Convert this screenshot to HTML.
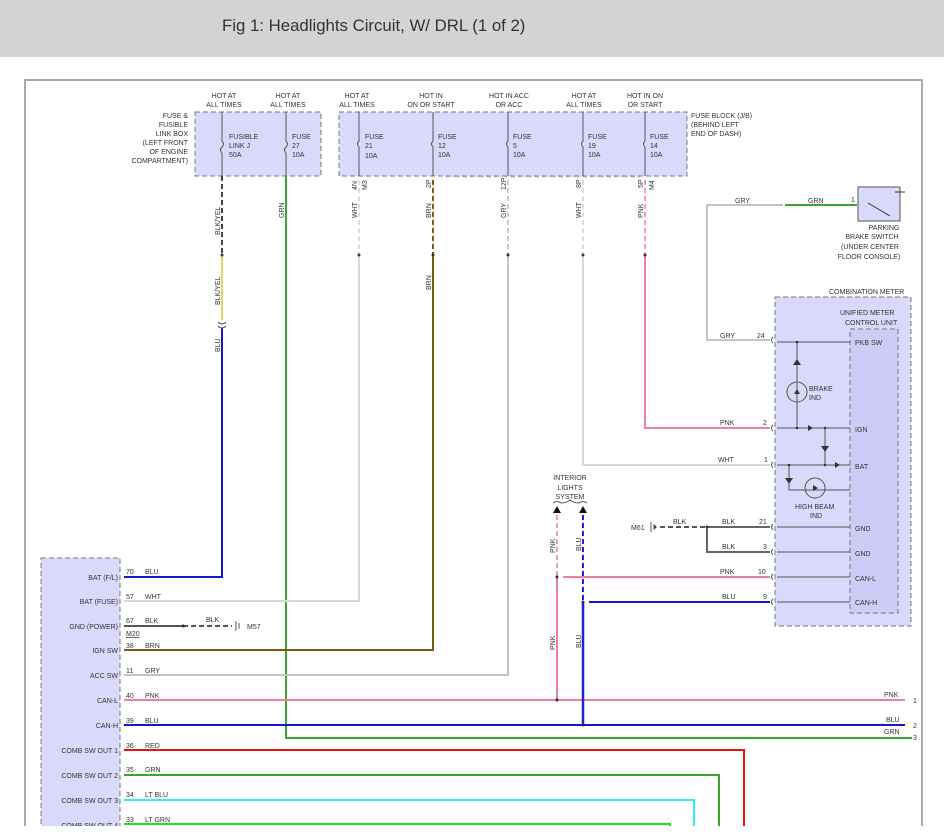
<!DOCTYPE html>
<html><head><meta charset="utf-8"><style>
body{margin:0;width:944px;height:839px;overflow:hidden;background:#fff;font-family:"Liberation Sans",sans-serif}
.hdr{position:absolute;left:0;top:0;width:944px;height:57px;background:#d3d3d3}
.hdr span{position:absolute;left:222px;top:16px;font-size:16.8px;color:#333}
svg{position:absolute;left:0;top:0}
text{font-family:"Liberation Sans",sans-serif;font-size:7px;fill:#333}
.cut{position:absolute;left:0;top:826px;width:944px;height:13px;background:#fff}
</style></head><body>
<div class="hdr"><span>Fig 1: Headlights Circuit, W/ DRL (1 of 2)</span></div>
<svg width="944" height="839" viewBox="0 0 944 839">
<path d="M25 839V80H922V839" fill="none" stroke="#aaa" stroke-width="2"/>
<rect x="195" y="112" width="126" height="64" fill="#d9d9fb" stroke="#777" stroke-dasharray="5,3"/>
<rect x="339" y="112" width="348" height="64" fill="#d9d9fb" stroke="#777" stroke-dasharray="5,3"/>
<g text-anchor="middle">
<text x="224" y="98">HOT AT</text><text x="224" y="107">ALL TIMES</text>
<text x="288" y="98">HOT AT</text><text x="288" y="107">ALL TIMES</text>
<text x="357" y="98">HOT AT</text><text x="357" y="107">ALL TIMES</text>
<text x="431" y="98">HOT IN</text><text x="431" y="107">ON OR START</text>
<text x="509" y="98">HOT IN ACC</text><text x="509" y="107">OR ACC</text>
<text x="584" y="98">HOT AT</text><text x="584" y="107">ALL TIMES</text>
<text x="645" y="98">HOT IN ON</text><text x="645" y="107">OR START</text>
</g>
<g text-anchor="end">
<text x="188" y="118">FUSE &amp;</text><text x="188" y="127">FUSIBLE</text><text x="188" y="136">LINK BOX</text><text x="188" y="145">(LEFT FRONT</text><text x="188" y="154">OF ENGINE</text><text x="188" y="163">COMPARTMENT)</text>
</g>
<text x="691" y="118">FUSE BLOCK (J/B)</text><text x="691" y="127">(BEHIND LEFT</text><text x="691" y="136">END OF DASH)</text>
<g stroke="#555" fill="none">
<path d="M222 112V141q3 3 0 6q-3 3 0 6V176M286 112V141q3 3 0 6q-3 3 0 6V176"/>
<path d="M359 112V141q-3 3 0 6V176M433 112V141q-3 3 0 6V176M508 112V141q-3 3 0 6V176M583 112V141q-3 3 0 6V176M645 112V141q-3 3 0 6V176"/>
</g>
<text x="229" y="139">FUSIBLE</text><text x="229" y="148">LINK J</text><text x="229" y="157">50A</text>
<text x="292" y="139">FUSE</text><text x="292" y="148">27</text><text x="292" y="157">10A</text>
<text x="365" y="139">FUSE</text><text x="365" y="148">21</text><text x="365" y="158">10A</text>
<text x="438" y="139">FUSE</text><text x="438" y="148">12</text><text x="438" y="157">10A</text>
<text x="513" y="139">FUSE</text><text x="513" y="148">5</text><text x="513" y="157">10A</text>
<text x="588" y="139">FUSE</text><text x="588" y="148">19</text><text x="588" y="157">10A</text>
<text x="650" y="139">FUSE</text><text x="650" y="148">14</text><text x="650" y="157">10A</text>
<path d="M445 177H640" stroke="#ccc" stroke-dasharray="4,2"/>
<g fill="none" stroke-width="2">
<path d="M222 176V255" stroke="#444" stroke-dasharray="5,3"/>
<path d="M222 255V320" stroke="#cc3" stroke-width="1.5"/>
<path d="M222 328V577H124" stroke="#1515d0"/>
<path d="M286 176V738H912" stroke="#3aa530"/>
<path d="M359 180V255" stroke="#ddd" stroke-dasharray="5,3"/>
<path d="M359 255V601H124" stroke="#d8d8d8"/>
<path d="M433 180V255" stroke="#7a5c10" stroke-dasharray="5,3"/>
<path d="M433 255V650H124" stroke="#7a5c10"/>
<path d="M508 180V255" stroke="#ccc" stroke-dasharray="5,3"/>
<path d="M508 255V675H124" stroke="#c4c4c4"/>
<path d="M583 180V255" stroke="#ddd" stroke-dasharray="5,3"/>
<path d="M583 255V465H770" stroke="#d8d8d8"/>
<path d="M645 180V255" stroke="#f59ab0" stroke-dasharray="5,3"/>
<path d="M645 255V428H770" stroke="#f07f99"/>
<path d="M124 700H905" stroke="#f07f99"/>
<path d="M124 725H905" stroke="#1515d0"/>
<path d="M124 750H744V839" stroke="#ee1111"/>
<path d="M124 775H719V839" stroke="#3aa530"/>
<path d="M124 800H694V839" stroke="#33eeee"/>
<path d="M124 824H670V839" stroke="#22dd22"/>
<path d="M124 626H183" stroke="#555"/>
<path d="M183 626H232" stroke="#555" stroke-dasharray="5,3"/>
<path d="M557 515V577" stroke="#f59ab0" stroke-dasharray="5,3"/>
<path d="M557 577V700" stroke="#f07f99"/>
<path d="M583 515V602" stroke="#2020e0" stroke-dasharray="5,3"/>
<path d="M583 602V725" stroke="#2020e0" stroke-width="2.5"/>
<path d="M563 577H770" stroke="#f07f99"/>
<path d="M589 602H770" stroke="#1515d0"/>
<path d="M785 205H857" stroke="#3aa530"/>
<path d="M783 205H707V340H770" stroke="#c4c4c4"/>
<path d="M660 527H707" stroke="#555" stroke-dasharray="5,3"/>
<path d="M707 527H770M707 527V552H770" stroke="#666"/>
</g>
<g fill="#333"><circle cx="222" cy="255" r="1.5"/><circle cx="359" cy="255" r="1.5"/><circle cx="433" cy="255" r="1.5"/><circle cx="508" cy="255" r="1.5"/><circle cx="583" cy="255" r="1.5"/><circle cx="645" cy="255" r="1.5"/><circle cx="183" cy="626" r="1.5"/><circle cx="707" cy="527" r="1.5"/><circle cx="557" cy="577" r="1.5"/><circle cx="583" cy="602" r="1.5"/><circle cx="557" cy="700" r="1.5"/><circle cx="583" cy="725" r="1.5"/><circle cx="655" cy="527" r="1.5"/></g>
<path d="M218 322q4 4 8 0M218 326q4 4 8 0" stroke="#555" fill="none"/>
<g font-size="7">
<text transform="translate(220,235) rotate(-90)">BLK/YEL</text>
<text transform="translate(220,305) rotate(-90)">BLK/YEL</text>
<text transform="translate(220,352) rotate(-90)">BLU</text>
<text transform="translate(284,218) rotate(-90)">GRN</text>
<text transform="translate(357,218) rotate(-90)">WHT</text>
<text transform="translate(431,218) rotate(-90)">BRN</text>
<text transform="translate(431,290) rotate(-90)">BRN</text>
<text transform="translate(506,218) rotate(-90)">GRY</text>
<text transform="translate(581,218) rotate(-90)">WHT</text>
<text transform="translate(643,218) rotate(-90)">PNK</text>
<text transform="translate(357,190) rotate(-90)">4N</text>
<text transform="translate(367,190) rotate(-90)">M3</text>
<text transform="translate(431,188) rotate(-90)">2P</text>
<text transform="translate(506,190) rotate(-90)">12P</text>
<text transform="translate(581,188) rotate(-90)">8P</text>
<text transform="translate(643,188) rotate(-90)">5P</text>
<text transform="translate(654,190) rotate(-90)">M4</text>
<text transform="translate(555,553) rotate(-90)">PNK</text>
<text transform="translate(581,551) rotate(-90)">BLU</text>
<text transform="translate(555,650) rotate(-90)">PNK</text>
<text transform="translate(581,648) rotate(-90)">BLU</text>
</g>
<rect x="858" y="187" width="42" height="34" fill="#d9d9fb" stroke="#555"/>
<path d="M868 203L890 216M895 192H905" stroke="#333"/>
<text x="735" y="203">GRY</text><text x="808" y="203">GRN</text><text x="851" y="202">1</text>
<g text-anchor="middle"><text x="884" y="230">PARKING</text><text x="872" y="239">BRAKE SWITCH</text><text x="870" y="249">(UNDER CENTER</text><text x="869" y="259">FLOOR CONSOLE)</text></g>
<text x="829" y="294">COMBINATION METER</text>
<rect x="775" y="297" width="136" height="329" fill="#d9d9fb" stroke="#777" stroke-dasharray="5,3"/>
<rect x="850" y="329" width="48" height="284" fill="#ccccf6" stroke="#777" stroke-dasharray="5,3"/>
<text x="840" y="315">UNIFIED METER</text><text x="845" y="325">CONTROL UNIT</text>
<g stroke="#555" fill="none">
<path d="M777 342H850M777 428H850M777 465H850M777 527H850M777 552H850M777 577H850M777 602H850M797 342V428M825 428V465M789 465V490H850"/>
<circle cx="797" cy="392" r="10"/><circle cx="815" cy="488" r="10"/>
</g>
<g fill="#333"><path d="M793 365h8l-4-6zM808 425v6l5-3zM821 446h8l-4 6zM835 462v6l5-3zM785 478h8l-4 6zM794 394h6l-3-5zM813 485v6l5-3z"/>
<circle cx="797" cy="342" r="1.3"/><circle cx="797" cy="428" r="1.3"/><circle cx="825" cy="428" r="1.3"/><circle cx="825" cy="465" r="1.3"/><circle cx="789" cy="465" r="1.3"/></g>
<text x="809" y="391">BRAKE</text><text x="809" y="400">IND</text>
<text x="795" y="509">HIGH BEAM</text><text x="810" y="518">IND</text>
<g><text x="855" y="345">PKB SW</text><text x="855" y="432">IGN</text><text x="855" y="469">BAT</text><text x="855" y="531">GND</text><text x="855" y="556">GND</text><text x="855" y="581">CAN-L</text><text x="855" y="605">CAN-H</text></g>
<text x="720" y="338">GRY</text><text x="757" y="338">24</text>
<text x="720" y="425">PNK</text><text x="763" y="425">2</text>
<text x="718" y="462">WHT</text><text x="764" y="462">1</text>
<text x="673" y="524">BLK</text><text x="722" y="524">BLK</text><text x="759" y="524">21</text>
<text x="722" y="549">BLK</text><text x="763" y="549">3</text>
<text x="720" y="574">PNK</text><text x="758" y="574">10</text>
<text x="722" y="599">BLU</text><text x="763" y="599">9</text>
<text x="631" y="530">M61</text>
<path d="M651 522v10M654 524v6" stroke="#555"/>
<g stroke="#555" fill="none"><path d="M773 337q-3 3 0 6M773 425q-3 3 0 6M773 462q-3 3 0 6M773 524q-3 3 0 6M773 549q-3 3 0 6M773 574q-3 3 0 6M773 599q-3 3 0 6"/></g>
<g text-anchor="middle"><text x="570" y="480">INTERIOR</text><text x="570" y="490">LIGHTS</text><text x="570" y="499">SYSTEM</text></g>
<path d="M553 503q4-3 8 0q5 0 9-3q4 3 9 3q4-3 8 0" stroke="#555" fill="none"/>
<path d="M553 513h8l-4-7zM579 513h8l-4-7z" fill="#111"/>
<text x="884" y="697">PNK</text><text x="913" y="703">1</text>
<text x="886" y="722">BLU</text><text x="913" y="728">2</text>
<text x="884" y="734">GRN</text><text x="913" y="740">3</text>
<rect x="41" y="558" width="79" height="290" fill="#d9d9fb" stroke="#777" stroke-dasharray="5,3"/>
<g text-anchor="end">
<text x="118" y="580">BAT (F/L)</text><text x="118" y="604">BAT (FUSE)</text><text x="118" y="629">GND (POWER)</text><text x="118" y="653">IGN SW</text><text x="118" y="678">ACC SW</text><text x="118" y="703">CAN-L</text><text x="118" y="728">CAN-H</text><text x="118" y="753">COMB SW OUT 1</text><text x="118" y="778">COMB SW OUT 2</text><text x="118" y="803">COMB SW OUT 3</text><text x="118" y="828">COMB SW OUT 4</text>
</g>
<g><text x="126" y="574">70</text><text x="145" y="574">BLU</text>
<text x="126" y="599">57</text><text x="145" y="599">WHT</text>
<text x="126" y="623">67</text><text x="145" y="623">BLK</text><text x="206" y="622">BLK</text><text x="247" y="629">M57</text><text x="126" y="636" text-decoration="underline">M20</text>
<text x="126" y="648">38</text><text x="145" y="648">BRN</text>
<text x="126" y="673">11</text><text x="145" y="673">GRY</text>
<text x="126" y="698">40</text><text x="145" y="698">PNK</text>
<text x="126" y="723">39</text><text x="145" y="723">BLU</text>
<text x="126" y="748">36</text><text x="145" y="748">RED</text>
<text x="126" y="772">35</text><text x="145" y="772">GRN</text>
<text x="126" y="797">34</text><text x="145" y="797">LT BLU</text>
<text x="126" y="822">33</text><text x="145" y="822">LT GRN</text></g>
<path d="M236 621v10M239 623v6" stroke="#555"/>
</svg>
<div class="cut"></div>
</body></html>
